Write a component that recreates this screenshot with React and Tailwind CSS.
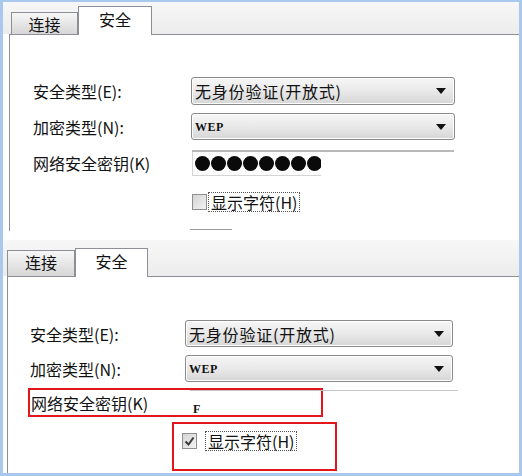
import React from 'react';

const cjk = "font-['Noto_Sans_CJK_SC','Noto_Sans',sans-serif]";

function Dropdown({ text, mono, className }) {
  return (
    <div
      className={`flex items-center justify-between rounded-[3px] border border-[#8a8a8a] bg-gradient-to-b from-[#f6f6f6] via-[#e9e9e9] to-[#d6d6d6] pl-[3px] pr-[8px] shadow-[inset_0_0_0_1px_#ffffff] ${className}`}
    >
      {mono ? (
        <span className="font-['Liberation_Serif',serif] text-[12px] font-bold tracking-[0.5px] text-[#111]">{text}</span>
      ) : (
        <span className="whitespace-nowrap text-[16px] leading-none tracking-[0.8px] text-[#111]">{text}</span>
      )}
      <svg width="10" height="6" viewBox="0 0 10 6">
        <path d="M0 0 H10 L5 6 Z" fill="#111" />
      </svg>
    </div>
  );
}

function Checkbox({ checked }) {
  return (
    <div className="flex h-[16px] w-[15px] shrink-0 items-center justify-center border border-[#8f8f8f] bg-gradient-to-br from-[#d4d4d4] to-[#f4f4f4]">
      {checked && (
        <svg width="11" height="11" viewBox="0 0 11 11">
          <path d="M1.5 5.5 L4.5 8.5 L9.5 1.5" fill="none" stroke="#3a3a3a" strokeWidth="2" />
        </svg>
      )}
    </div>
  );
}

function Tabs({ h, tab1H, tab1W, tab2H, tab2W, pl }) {
  return (
    <div className={`flex shrink-0 items-end bg-gradient-to-b from-[#f7f7f7] to-[#ececec] ${h} ${pl}`}>
      <div
        className={`flex items-start justify-center border border-b-0 border-[#8c8f96] bg-gradient-to-b from-[#f7f7f7] to-[#d6d6d6] pt-[1px] text-[16px] leading-[20px] text-[#111] ${tab1H} ${tab1W}`}
      >
        连接
      </div>
      <div
        className={`relative top-[1px] flex items-start justify-center border border-b-0 border-[#8c8f96] bg-white pt-[2px] text-[16px] leading-[20px] text-[#111] ${tab2H} ${tab2W}`}
      >
        安全
      </div>
    </div>
  );
}

export default function App() {
  return (
    <div
      className={`flex h-[476px] w-[522px] flex-col overflow-hidden border-b-[3px] border-l-[3px] border-r-[3px] border-t-[2px] border-[#a9c8ee] bg-white ${cjk}`}
    >
      {/* upper screenshot */}
      <div className="flex h-[229px] shrink-0 flex-col">
        <Tabs h="h-[32px]" pl="pl-[8px]" tab1H="h-[22px]" tab1W="w-[67px]" tab2H="h-[29px]" tab2W="w-[74px]" />
        <div className="ml-[6px] flex flex-1 flex-col border-l border-t border-[#8c8f96] pl-[23px] pt-[42px] text-[#111]">
          <div className="flex h-[28px] items-center">
            <span className="w-[158px] shrink-0 whitespace-nowrap text-[16px]">安全类型(E):</span>
            <Dropdown text="无身份验证(开放式)" className="h-[28px] w-[264px]" />
          </div>
          <div className="mt-[8px] flex h-[27px] items-center">
            <span className="w-[158px] shrink-0 whitespace-nowrap text-[16px]">加密类型(N):</span>
            <Dropdown text="WEP" mono className="h-[27px] w-[264px]" />
          </div>
          <div className="mt-[10px] flex h-[26px] items-center">
            <span className="w-[159px] shrink-0 whitespace-nowrap text-[16px]">网络安全密钥(K)</span>
            <div className="h-[26px] w-[262px] border-t-2 border-[#b9b9b9]">
              <div className="flex h-[24px] w-[129px] items-center gap-[1px] overflow-hidden border-b border-l border-[#d4d4d4] pl-[2px]">
                {Array.from({ length: 9 }).map((_, i) => (
                  <div key={i} className="h-[15px] w-[15px] shrink-0 rounded-full bg-[#0a0a0a]" />
                ))}
              </div>
            </div>
          </div>
          <div className="ml-[159px] mt-[16px] flex h-[20px] items-center gap-[1px]">
            <Checkbox />
            <span className="whitespace-nowrap border border-dotted border-[#555] px-[2px] text-[16px] leading-[18px]">显示字符(H)</span>
          </div>
          <div className="ml-[157px] mt-[17px] h-px w-[42px] bg-[#9a9a9a]" />
        </div>
      </div>

      <div className="h-[9px] shrink-0" />

      {/* lower screenshot */}
      <div className="flex flex-1 flex-col">
        <Tabs h="h-[36px]" pl="pl-[4px]" tab1H="h-[26px]" tab1W="w-[68px]" tab2H="h-[29px]" tab2W="w-[73px]" />
        <div className="ml-[4px] flex flex-1 flex-col border-l border-t border-[#8c8f96] pt-[43px] text-[#111]">
          <div className="flex h-[27px] items-center pl-[22px]">
            <span className="w-[155px] shrink-0 whitespace-nowrap text-[16px]">安全类型(E):</span>
            <Dropdown text="无身份验证(开放式)" className="h-[27px] w-[268px]" />
          </div>
          <div className="mt-[8px] flex h-[27px] items-center pl-[22px]">
            <span className="w-[155px] shrink-0 whitespace-nowrap text-[16px]">加密类型(N):</span>
            <Dropdown text="WEP" mono className="h-[27px] w-[268px]" />
          </div>
          <div className="ml-[20px] mt-[6px] flex h-[29px] w-[295px] items-center border-2 border-[#e2161b]">
            <span className="w-[160px] shrink-0 whitespace-nowrap pl-[1px] text-[16px]">网络安全密钥(K)</span>
            <div className="h-[25px] w-[268px] shrink-0 border-t border-[#c4c4c4] pl-[3px] pt-[3px]">
              <span className="font-['Liberation_Serif',serif] text-[12px] font-bold">F</span>
            </div>
          </div>
          <div className="ml-[164px] mt-[5px] h-[49px] w-[165px] border-2 border-[#e2161b] pl-[8px] pt-[8px]">
            <div className="flex h-[18px] items-center gap-[8px]">
              <Checkbox checked />
              <span className="whitespace-nowrap border border-dotted border-[#555] px-[2px] text-[16px] leading-[18px]">显示字符(H)</span>
            </div>
          </div>
        </div>
      </div>
    </div>
  );
}
